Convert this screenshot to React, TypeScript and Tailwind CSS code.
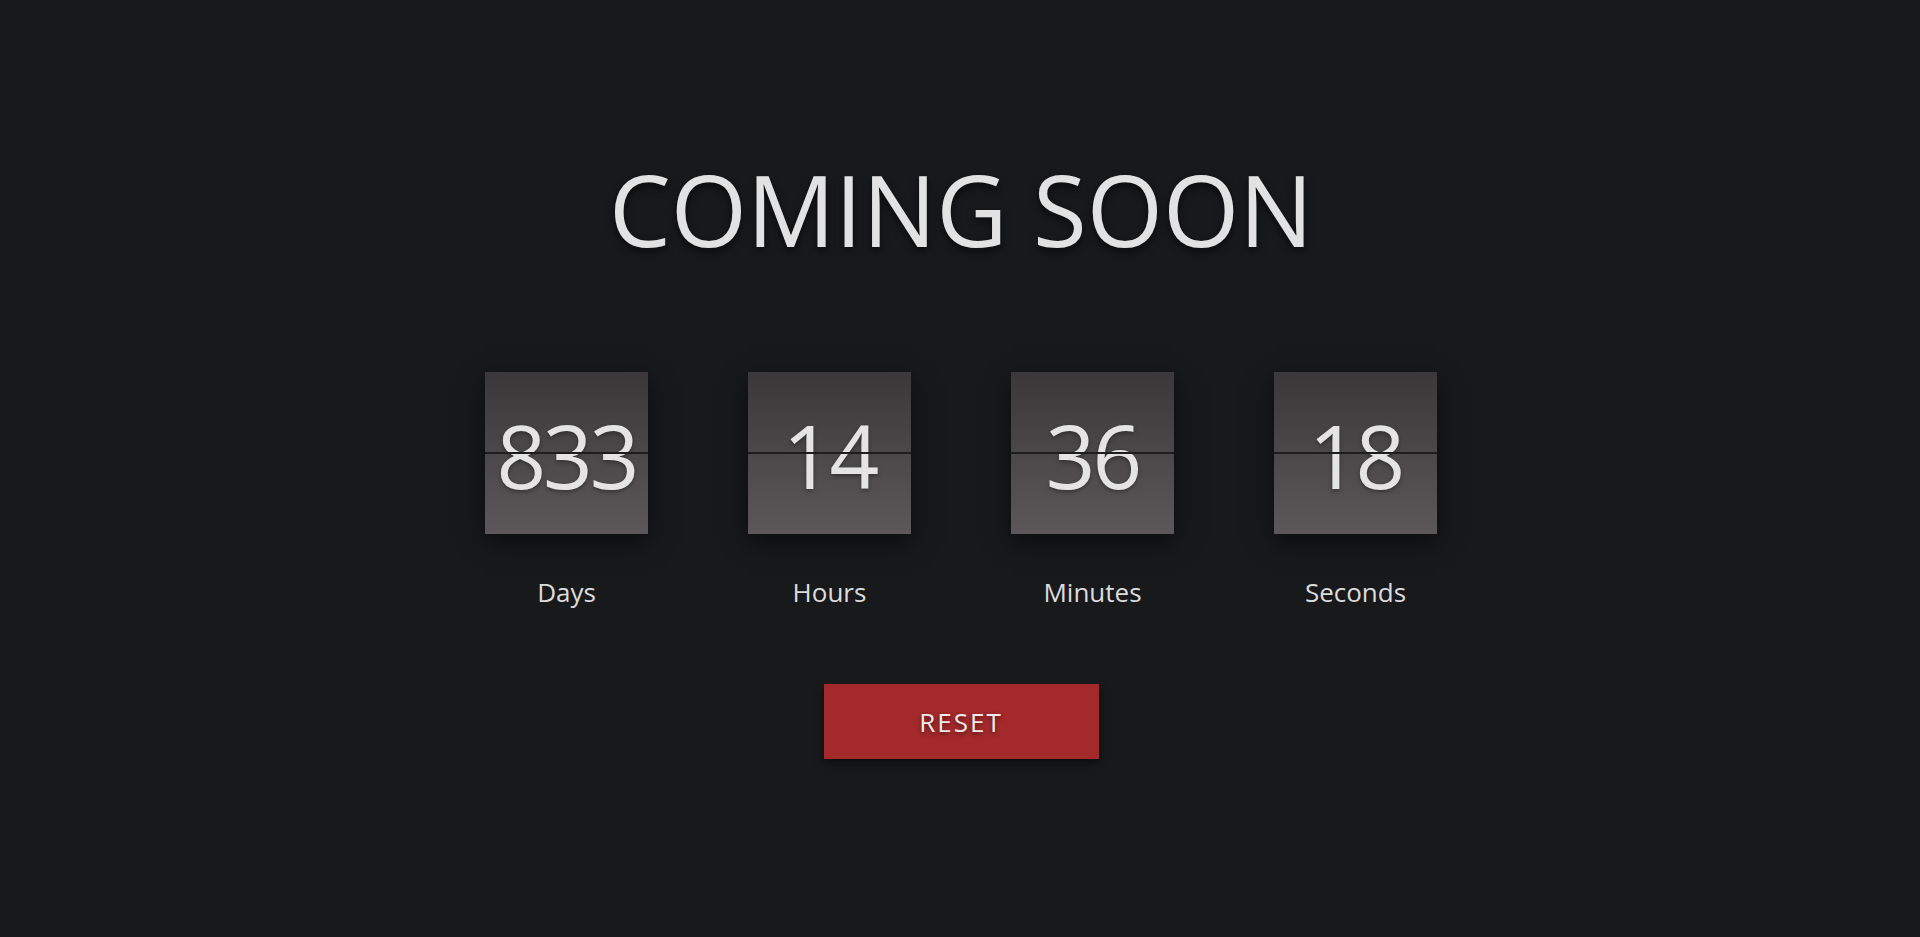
const units = [
  { value: "833", label: "Days" },
  { value: "14", label: "Hours" },
  { value: "36", label: "Minutes" },
  { value: "18", label: "Seconds" },
];

function FlipBox({ value, label }: { value: string; label: string }) {
  return (
    <div className="flex flex-col items-center">
      <div className="relative flex h-[162px] w-[163px] items-center justify-center bg-gradient-to-b from-[#3a3839] to-[#5c5859] shadow-[0_8px_24px_rgba(0,0,0,0.55)]">
        <span className="mt-[4px] text-[87px] leading-none tracking-[-3px] text-[#e4e4e4] [text-shadow:0_2px_4px_rgba(0,0,0,0.35)]">
          {value}
        </span>
        {/* flip seam */}
        <div className="absolute left-0 right-0 top-[80px] h-[2px] bg-[#1e1d1e]" />
      </div>
      <div className="mt-[45px] text-[26px] leading-none text-[#dcdcdc]">{label}</div>
    </div>
  );
}

export default function App() {
  return (
    <div className="min-h-[937px] w-full bg-[#18191b] font-['Open_Sans','Noto_Sans',sans-serif]">
      <div className="flex flex-col items-center pl-[2px] pt-[160px]">
        <h1 className="text-[98px] font-normal leading-none text-[#e2e2e2] [text-shadow:0_4px_8px_rgba(0,0,0,0.6)]">
          COMING SOON
        </h1>

        <div className="mt-[114px] flex gap-[100px]">
          {units.map((u) => (
            <FlipBox key={u.label} value={u.value} label={u.label} />
          ))}
        </div>

        <button className="mt-[79px] h-[75px] w-[275px] bg-[#a3292b] text-[26px] leading-none tracking-[2px] text-[#f3e9e9] shadow-[0_4px_8px_rgba(0,0,0,0.5)] [text-shadow:0_2px_4px_rgba(0,0,0,0.5)]">
          RESET
        </button>
      </div>
    </div>
  );
}
